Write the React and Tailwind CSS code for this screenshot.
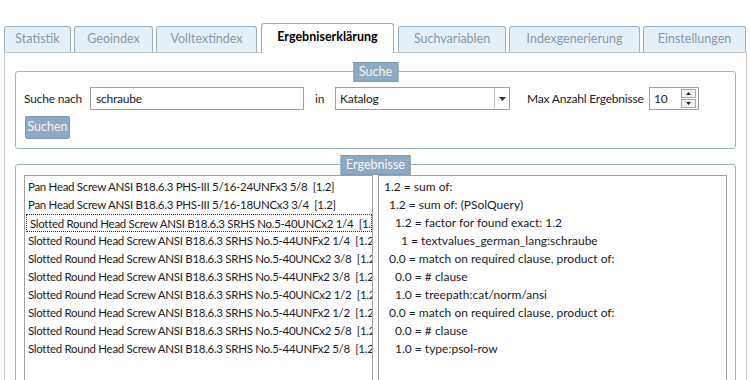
import React from 'react';

const tabs = [
    { label: 'Statistik', w: 'w-[67px]' },
    { label: 'Geoindex', w: 'w-[79px]' },
    { label: 'Volltextindex', w: 'w-[101px]' },
    { label: 'Ergebniserklärung', w: 'w-[133px]', active: true },
    { label: 'Suchvariablen', w: 'w-[108px]' },
    { label: 'Indexgenerierung', w: 'w-[131px]' },
    { label: 'Einstellungen', w: 'w-[103px]' },
];

const results = [
    'Pan Head Screw ANSI B18.6.3 PHS-III 5/16-24UNFx3 5/8  [1.2]',
    'Pan Head Screw ANSI B18.6.3 PHS-III 5/16-18UNCx3 3/4  [1.2]',
    'Slotted Round Head Screw ANSI B18.6.3 SRHS No.5-40UNCx2 1/4  [1.2]',
    'Slotted Round Head Screw ANSI B18.6.3 SRHS No.5-44UNFx2 1/4  [1.2]',
    'Slotted Round Head Screw ANSI B18.6.3 SRHS No.5-40UNCx2 3/8  [1.2]',
    'Slotted Round Head Screw ANSI B18.6.3 SRHS No.5-44UNFx2 3/8  [1.2]',
    'Slotted Round Head Screw ANSI B18.6.3 SRHS No.5-40UNCx2 1/2  [1.2]',
    'Slotted Round Head Screw ANSI B18.6.3 SRHS No.5-44UNFx2 1/2  [1.2]',
    'Slotted Round Head Screw ANSI B18.6.3 SRHS No.5-40UNCx2 5/8  [1.2]',
    'Slotted Round Head Screw ANSI B18.6.3 SRHS No.5-44UNFx2 5/8  [1.2]',
];

// indent level, text
const explain = [
    [0, '1.2 = sum of:'],
    [1, '1.2 = sum of: (PSolQuery)'],
    [2, '1.2 = factor for found exact: 1.2'],
    [3, '1 = textvalues_german_lang:schraube'],
    [1, '0.0 = match on required clause, product of:'],
    [2, '0.0 = # clause'],
    [2, '1.0 = treepath:cat/norm/ansi'],
    [1, '0.0 = match on required clause, product of:'],
    [2, '0.0 = # clause'],
    [2, '1.0 = type:psol-row'],
];

const indents = ['pl-0', 'pl-[5px]', 'pl-[11px]', 'pl-[17px]'];

const GroupBox = ({ title, className, children }) => (
    <div className={`relative border border-[#9fb4c8] rounded-[3px] ${className}`}>
        <div className="absolute left-1/2 -translate-x-1/2 -top-[10px] bg-[#8eaac3] text-[#f4f7fa] text-[12.5px] leading-[18px] px-[5px] border border-[#7f9cb6]">
            {title}
        </div>
        {children}
    </div>
);

const App = () => {
    return (
        <div className="w-[750px] h-[380px] bg-white overflow-hidden text-[12px] text-[#1b1b24]" style={{ fontFamily: 'Lato, "Noto Sans", sans-serif' }}>
            {/* tab strip */}
            <div className="flex items-end gap-[3px] pl-[4px] pt-[23px] relative z-10 text-[12.5px]">
                {tabs.map((t) =>
                    t.active ? (
                        <div
                            key={t.label}
                            className={`${t.w} h-[30px] -mb-px bg-white border border-b-0 border-[#a9a9a9] rounded-t-[3px] flex items-center justify-center font-bold text-black pb-[3px] mx-[1px]`}
                        >
                            {t.label}
                        </div>
                    ) : (
                        <div
                            key={t.label}
                            className={`${t.w} h-[26px] bg-[#e5eff8] border border-b-0 border-[#98afc4] rounded-t-[3px] flex items-center justify-center text-[#8797a9]`}
                        >
                            {t.label}
                        </div>
                    )
                )}
            </div>

            {/* tab content */}
            <div className="ml-[4px] w-[743px] h-[330px] border-l border-t border-r border-[#c8c8c8] px-[10px] pt-[18px]">
                <GroupBox title="Suche" className="h-[78px] px-[8px] pt-[15px]">
                    <div className="flex items-center h-[23px] tracking-[-0.2px]">
                        <span className="w-[66px] shrink-0">Suche nach</span>
                        <div className="w-[214px] h-[23px] border border-[#a0a0a0] px-[5px] flex items-center">schraube</div>
                        <span className="ml-[11px] w-[20px] shrink-0">in</span>
                        <div className="w-[175px] h-[23px] border border-[#a0a0a0] flex items-center">
                            <span className="flex-1 px-[4px]">Katalog</span>
                            <div className="w-[15px] h-full border-l border-[#c4c4c4] flex items-center justify-center">
                                <svg width="7" height="4" viewBox="0 0 7 4">
                                    <path d="M0 0h7L3.5 4z" fill="#333" />
                                </svg>
                            </div>
                        </div>
                        <span className="ml-[17px] w-[122px] shrink-0">Max Anzahl Ergebnisse</span>
                        <div className="w-[50px] h-[23px] border border-[#a0a0a0] flex items-center">
                            <span className="flex-1 px-[4px]">10</span>
                            <div className="w-[15px] h-[19px] mr-[2px] flex flex-col gap-px">
                                <div className="flex-1 border border-[#a9a9a9] bg-[#f0f0f0] flex items-center justify-center">
                                    <svg width="5" height="3" viewBox="0 0 5 3"><path d="M0 3h5L2.5 0z" fill="#222" /></svg>
                                </div>
                                <div className="flex-1 border border-[#a9a9a9] bg-[#f0f0f0] flex items-center justify-center">
                                    <svg width="5" height="3" viewBox="0 0 5 3"><path d="M0 0h5L2.5 3z" fill="#222" /></svg>
                                </div>
                            </div>
                        </div>
                    </div>
                    <button className="mt-[6px] ml-px w-[45px] h-[23px] bg-[#8eaac3] border border-[#7c9ab5] rounded-[2px] text-[#eef3f8] text-[12.5px] leading-none">
                        Suchen
                    </button>
                </GroupBox>

                <GroupBox title="Ergebnisse" className="mt-[15px] h-[240px] px-[8px] pt-[10px]">
                    <div className="grid grid-cols-2 gap-[5px] h-[230px]">
                        <div className="border border-[#a0a0a0] overflow-hidden pt-[2px] pl-px text-[11.5px] tracking-[-0.3px]">
                            {results.map((r, i) => (
                                <div
                                    key={i}
                                    className={`h-[18px] leading-[18px] whitespace-pre pl-[2px] ${i === 2 ? 'border border-dotted border-[#333] leading-[16px] pl-[3px]' : ''}`}
                                >
                                    {r}
                                </div>
                            ))}
                        </div>
                        <div className="border border-[#a0a0a0] overflow-hidden pt-[2px] pl-[5px]">
                            {explain.map(([lvl, text], i) => (
                                <div key={i} className={`h-[18px] leading-[18px] whitespace-pre ${indents[lvl]}`}>
                                    {text}
                                </div>
                            ))}
                        </div>
                    </div>
                </GroupBox>
            </div>
        </div>
    );
};

export default App;
